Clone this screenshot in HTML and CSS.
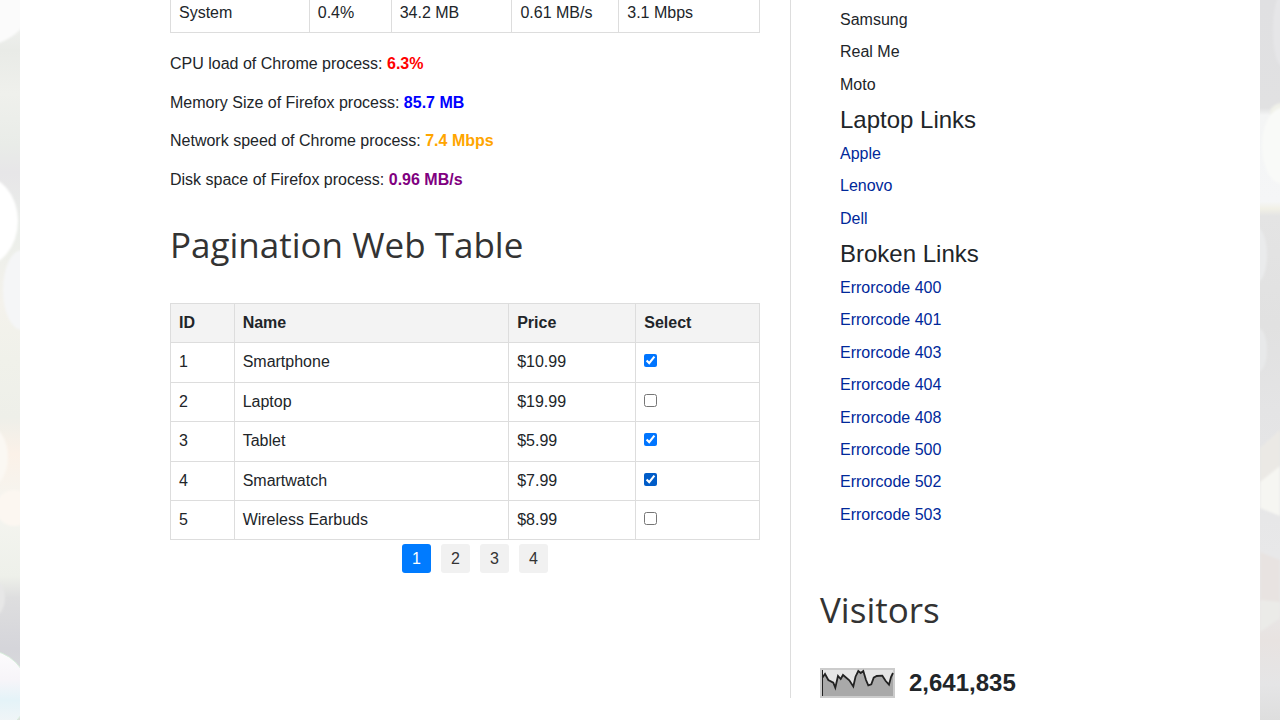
FILE: index.html
```
<!DOCTYPE html>
<html lang="en">
<head>
<meta charset="utf-8">
<meta name="viewport" content="width=device-width, initial-scale=1">
<title>Pagination Web Table</title>
<link rel="stylesheet" href="styles.css">
</head>
<body>
<svg class="backdrop backdrop-left" viewBox="0 0 20 720" preserveAspectRatio="none" aria-hidden="true">
  <defs>
    <linearGradient id="left-tone" x1="0" y1="0" x2="0" y2="1">
      <stop offset="0" stop-color="#f5f5f5"/>
      <stop offset=".07" stop-color="#e9ebe7"/>
      <stop offset=".13" stop-color="#eff0ec"/>
      <stop offset=".2" stop-color="#e9ece8"/>
      <stop offset=".24" stop-color="#e7e6e8"/>
      <stop offset=".32" stop-color="#ebeeea"/>
      <stop offset=".42" stop-color="#f4f2ec"/>
      <stop offset=".5" stop-color="#f0f1ea"/>
      <stop offset=".58" stop-color="#eeefe9"/>
      <stop offset=".63" stop-color="#fbf1e8"/>
      <stop offset=".7" stop-color="#f5f5f0"/>
      <stop offset=".8" stop-color="#eef0ea"/>
      <stop offset=".83" stop-color="#dededf"/>
      <stop offset=".9" stop-color="#d5d5da"/>
      <stop offset="1" stop-color="#dde0de"/>
    </linearGradient>
    <linearGradient id="left-orb" x1="0" y1="0" x2="0" y2="1">
      <stop offset="0" stop-color="#fdfcfd"/>
      <stop offset=".35" stop-color="#f7f5f9"/>
      <stop offset=".6" stop-color="#e4f3f8"/>
      <stop offset="1" stop-color="#f8f6f7"/>
    </linearGradient>
    <filter id="haze" x="-50%" y="-20%" width="200%" height="140%"><feGaussianBlur stdDeviation="1"/></filter>
  </defs>
  <rect width="20" height="720" fill="url(#left-tone)"/>
  <g filter="url(#haze)">
    <ellipse cx="-16" cy="-5" rx="50" ry="50" fill="#fbfbfb"/>
    <ellipse cx="22" cy="290" rx="19" ry="40" fill="#f5f6f7"/>
    <ellipse cx="-22" cy="221" rx="40" ry="47" fill="#fff"/>
    <ellipse cx="-12" cy="457" rx="20" ry="31" fill="#fbf8f3"/>
    <ellipse cx="14" cy="508" rx="18" ry="18" fill="#fcf7f1"/>
    <ellipse cx="-10" cy="598" rx="15" ry="20" fill="#e7e7e7"/>
  </g>
  <circle cx="-14" cy="692" r="42" fill="url(#left-orb)" stroke="#d7eedb"/>
</svg>
<svg class="backdrop backdrop-right" viewBox="0 0 20 720" preserveAspectRatio="none" aria-hidden="true">
  <defs>
    <linearGradient id="right-tone" x1="0" y1="0" x2="0" y2="1">
      <stop offset="0" stop-color="#e0e0e2"/>
      <stop offset=".15" stop-color="#e1e1e2"/>
      <stop offset=".16" stop-color="#f4f5f5"/>
      <stop offset=".28" stop-color="#f5f6f7"/>
      <stop offset=".29" stop-color="#f1f0e6"/>
      <stop offset=".3" stop-color="#e4e4e4"/>
      <stop offset=".45" stop-color="#e1e1e1"/>
      <stop offset=".57" stop-color="#e4e4e5"/>
      <stop offset=".82" stop-color="#e9e9ea"/>
      <stop offset=".89" stop-color="#e8e3e1"/>
      <stop offset=".95" stop-color="#e5e5e6"/>
      <stop offset="1" stop-color="#dedede"/>
    </linearGradient>
  </defs>
  <rect width="20" height="720" fill="url(#right-tone)"/>
  <g filter="url(#haze)">
    <ellipse cx="22" cy="30" rx="9" ry="36" fill="#e6e6e8"/>
    <ellipse cx="22" cy="113" rx="12" ry="10" fill="#f0f1e9"/>
    <ellipse cx="22" cy="146" rx="20" ry="38" fill="#f9faf8"/>
    <ellipse cx="-4" cy="255" rx="11" ry="28" fill="#eaebec"/>
    <ellipse cx="-2" cy="350" rx="9" ry="22" fill="#e8e9ea"/>
    <path d="M0 448 20 430V476L0 492Z" fill="#ebe9e5"/>
    <path d="M0 482 20 466V516L0 508Z" fill="#f6f6f2"/>
    <path d="M0 552 20 560V612L0 600Z" fill="#e8e3e1"/>
    <path d="M0 600 20 602V618L0 632Z" fill="#ebebe8"/>
  </g>
</svg>

<div class="page">
  <div class="container">
    <main class="content">
      <table class="data-table process-table">
        <colgroup><col class="col-name"><col class="col-cpu"><col class="col-memory"><col class="col-disk"><col class="col-network"></colgroup>
        <tbody>
          <tr><td>System</td><td>0.4%</td><td>34.2 MB</td><td>0.61 MB/s</td><td>3.1 Mbps</td></tr>
        </tbody>
      </table>

      <p>CPU load of Chrome process: <strong class="cpu">6.3%</strong></p>
      <p>Memory Size of Firefox process: <strong class="memory">85.7 MB</strong></p>
      <p>Network speed of Chrome process: <strong class="network">7.4 Mbps</strong></p>
      <p>Disk space of Firefox process: <strong class="disk">0.96 MB/s</strong></p>

      <h2 class="title">Pagination Web Table</h2>
      <table class="data-table">
        <thead>
          <tr><th>ID</th><th>Name</th><th>Price</th><th>Select</th></tr>
        </thead>
        <tbody>
          <tr><td>1</td><td>Smartphone</td><td>$10.99</td><td><input type="checkbox" aria-label="Select Smartphone" checked></td></tr>
          <tr><td>2</td><td>Laptop</td><td>$19.99</td><td><input type="checkbox" aria-label="Select Laptop"></td></tr>
          <tr><td>3</td><td>Tablet</td><td>$5.99</td><td><input type="checkbox" aria-label="Select Tablet" checked></td></tr>
          <tr><td>4</td><td>Smartwatch</td><td>$7.99</td><td><input type="checkbox" class="is-hovered" aria-label="Select Smartwatch" checked></td></tr>
          <tr><td>5</td><td>Wireless Earbuds</td><td>$8.99</td><td><input type="checkbox" aria-label="Select Wireless Earbuds"></td></tr>
        </tbody>
      </table>
      <ul class="pagination">
        <li><a class="active" href="#1">1</a></li>
        <li><a href="#2">2</a></li>
        <li><a href="#3">3</a></li>
        <li><a href="#4">4</a></li>
      </ul>
    </main>

    <aside class="sidebar">
      <div class="links">
        <ul>
          <li>Samsung</li>
          <li>Real Me</li>
          <li>Moto</li>
        </ul>
        <h4>Laptop Links</h4>
        <ul>
          <li><a href="#apple">Apple</a></li>
          <li><a href="#lenovo">Lenovo</a></li>
          <li><a href="#dell">Dell</a></li>
        </ul>
        <h4>Broken Links</h4>
        <ul>
          <li><a href="#400">Errorcode 400</a></li>
          <li><a href="#401">Errorcode 401</a></li>
          <li><a href="#403">Errorcode 403</a></li>
          <li><a href="#404">Errorcode 404</a></li>
          <li><a href="#408">Errorcode 408</a></li>
          <li><a href="#500">Errorcode 500</a></li>
          <li><a href="#502">Errorcode 502</a></li>
          <li><a href="#503">Errorcode 503</a></li>
        </ul>
      </div>
      <h2 class="title">Visitors</h2>
      <div class="counter">
        <svg width="75" height="30" viewBox="0 0 75 30" role="img" aria-label="Visits over time">
          <rect width="75" height="30" fill="#ccc"/>
          <rect x="2" y="2" width="71" height="26" fill="#e5e5e5"/>
          <path d="M2.5 9.5 5 6 8.3 12l5 2.7 2 5L18 8l2.700 3L23 7l6.300 5.300 4 6.200 2.200-9.800L38.300 3l2.400 2 2.600-2L46 12l2.300 5.300 3-1 2.400-6.600 3-1.700 5.600-.3 3.400 5.300 3.300 3.700L71 9l2-4v23H2.500z" fill="#a9a9a9"/>
          <path d="M2.500 9.500 5 6 8.300 12l5 2.700 2 5L18 8l2.700 3L23 7l6.300 5.300 4 6.200 2.200-9.800L38.300 3l2.400 2 2.600-2L46 12l2.300 5.300 3-1 2.400-6.600 3-1.700 5.600-.3 3.400 5.300 3.300 3.700L71 9l2-4" fill="none" stroke="#222" stroke-width="1.800"/>
          <path d="M2.500 2v26" stroke="#222"/>
        </svg>
        <strong>2,641,835</strong>
      </div>
    </aside>
  </div>
</div>
</body>
</html>
```
FILE: styles.css
```
* {
  box-sizing: border-box;
}

body {
  margin: 0;
  color: #212529;
  font-family: "Liberation Sans", Arial, sans-serif;
  font-size: 16px;
  line-height: 1.4;
}

ul {
  margin: 0;
  padding: 0;
  list-style: none;
}

p {
  margin: 0 0 16px;
}

a {
  color: #00289a;
  text-decoration: none;
}

.backdrop {
  position: fixed;
  top: 0;
  z-index: -1;
  width: 20px;
  height: 100vh;
}

.backdrop-left {
  left: 0;
}

.backdrop-right {
  right: 0;
}

.page {
  min-height: 100vh;
  margin: 0 20px;
  padding: 0 20px 22px;
  background: #fff;
}

.container {
  display: grid;
  grid-template-columns: minmax(0, 31fr) minmax(0, 16fr);
  max-width: 940px;
  margin: 0 auto;
}

.content {
  padding-right: 30px;
}

.sidebar {
  padding: 4px 0 0 29px;
  border-left: 1px solid #ddd;
}

.data-table {
  width: 100%;
  border-collapse: collapse;
}

.data-table th,
.data-table td {
  padding: 8px;
  border: 1px solid #ddd;
  text-align: left;
}

.data-table th {
  background: #f3f3f3;
}

.data-table input {
  margin: 0;
}

.data-table .is-hovered {
  accent-color: #005cc8;
}

.process-table {
  margin-bottom: 20px;
}

.process-table td {
  padding-top: 2px;
  border-top: 0;
}

.col-name {
  width: 139px;
}

.col-cpu {
  width: 82px;
}

.col-memory {
  width: 121px;
}

.col-disk {
  width: 107px;
}

.col-network {
  width: 141px;
}

.cpu {
  color: red;
}

.memory {
  color: blue;
}

.network {
  color: orange;
}

.disk {
  color: purple;
}

.title {
  margin: 0;
  color: #333;
  font-family: "Open Sans", sans-serif;
  font-size: 35px;
  font-weight: 400;
  line-height: 54px;
}

.content .title {
  margin: 27px 0 31px;
}

.pagination {
  display: flex;
  justify-content: center;
  gap: 10px;
  margin-top: 4px;
  padding-left: 20px;
}

.pagination a {
  display: block;
  min-width: 29px;
  padding: 5px 10px;
  border-radius: 3px;
  background: #f1f1f1;
  color: #333;
  line-height: 19px;
}

.pagination .active {
  background: #007bff;
  color: #fff;
}

.links {
  padding-left: 20px;
}

.links li {
  padding: 5px 0;
}

.links h4 {
  margin: 5px 0 3px;
  font-size: 24px;
  font-weight: 400;
  line-height: 1.2;
}

.sidebar .title {
  margin: 52px 0 31px;
}

.counter {
  display: flex;
  align-items: center;
  gap: 14px;
}

.counter strong {
  font-size: 24px;
  line-height: 30px;
}
```
